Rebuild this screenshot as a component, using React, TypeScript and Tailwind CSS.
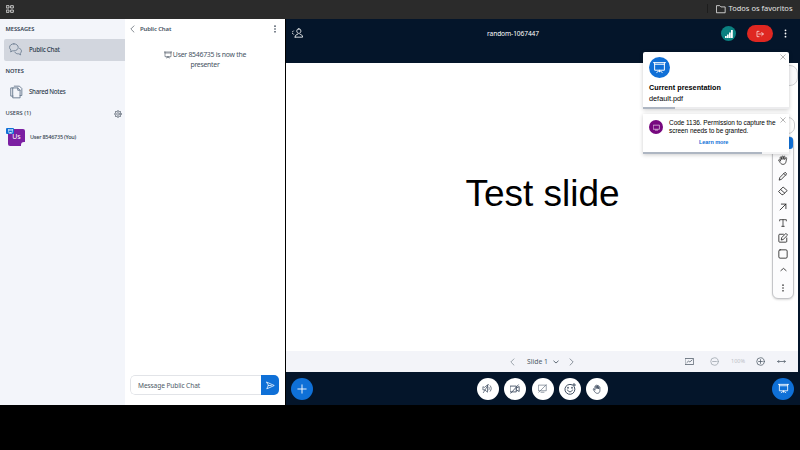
import type { ReactNode } from "react";

type IconProps = { className?: string; children: ReactNode; sw?: number };

function Icon({ className = "", children, sw = 1.5 }: IconProps) {
  return (
    <svg viewBox="0 0 24 24" className={"block shrink-0 " + className} fill="none" stroke="currentColor" strokeWidth={sw} strokeLinecap="round" strokeLinejoin="round">
      {children}
    </svg>
  );
}

const Kebab = ({ className }: { className: string }) => (
  <svg viewBox="0 0 24 24" className={"block shrink-0 " + className} fill="currentColor">
    <circle cx="12" cy="3.5" r="2.4" />
    <circle cx="12" cy="12" r="2.4" />
    <circle cx="12" cy="20.5" r="2.4" />
  </svg>
);

const Presentation = ({ className, sw = 1.8 }: { className: string; sw?: number }) => (
  <Icon className={className} sw={sw}>
    <path d="M1 3h22M3 3v14h18V3M3 6h18M12 17v3M7 21l3-2h4l3 2" />
  </Icon>
);

function Sidebar() {
  return (
    <nav className="flex w-[125px] shrink-0 flex-col bg-[#f3f5fa] text-[#2f3c4d]">
      <h2 className="mt-[5px] h-[10px] pl-[5.5px] text-[5.7px] font-semibold leading-[10px]">MESSAGES</h2>
      <div className="ml-1 mt-[5px] flex h-[22px] items-center rounded-l-[2px] bg-[#d2d6de] pb-[1px] pl-[5px]">
        <Icon className="size-[13px] text-[#6b7c90]" sw={1.6}>
          <path d="M9 1.5c-4.500 0-8 2.800-8 6.500 0 2 1 3.800 2.700 5L3 16.500l4-2.200c.7.100 1.300.2 2 .2 4.500 0 8-2.900 8-6.500s-3.500-6.500-8-6.500zM19.500 10c2.200 1 3.500 2.700 3.500 4.700 0 1.700-.9 3.200-2.200 4.100l.7 3.200-3.500-2c-3.500.3-6.200-1-7.200-3" />
        </Icon>
        <span className="ml-[7px] text-[6.2px] font-medium tracking-[-0.23px]">Public Chat</span>
      </div>
      <h2 className="mt-[5px] h-[11px] pl-[5.5px] text-[5.7px] font-semibold leading-[11px]">NOTES</h2>
      <div className="mt-[4px] flex h-[21px] items-center pl-[9px]">
        <Icon className="size-[14px] text-[#6b7c90]" sw={1.6}>
          <path d="M7 5h8l4 4v13H7zM15 5v4h4M7 19H3V5h4M9 2h9l4 4v12h-3" />
        </Icon>
        <span className="ml-[6px] text-[6.2px] font-medium tracking-[-0.28px]">Shared Notes</span>
      </div>
      <div className="mt-[6px] flex h-[11px] items-center justify-between pl-[5.500px] pr-[3px]">
        <h2 className="text-[5.700px] font-medium">USERS (1)</h2>
        <Icon className="size-[8px] text-[#56616e]" sw={2}>
          <circle cx="12" cy="12" r="9" />
          <circle cx="12" cy="12" r="4" />
          <path d="M12 1v2M12 21V23M1 12h2M21 12H23M4.200 4.200l1.400 1.400M18.400 18.400l1.400 1.400M4.200 19.800l1.400-1.400M18.400 5.600l1.400-1.400" />
        </Icon>
      </div>
      <div className="mt-[8px] flex h-[21px] items-center pl-[8px]">
        <div className="relative flex h-[17px] w-[17px] items-center justify-center rounded-[2px] bg-[#7b1fa2] text-[7px] text-white">
          Us
          <span className="absolute -left-[2px] -top-[1px] flex h-[6px] w-[8px] items-center justify-center rounded-[1px] bg-[#1070d7]">
            <Presentation className="size-[5px]" sw={2.5} />
          </span>
          <span className="absolute -bottom-[1px] -right-[1px] size-[5px] rounded-tl-[3px] bg-[#f3f5fa]" />
        </div>
        <span className="ml-[5px] text-[5.500px] font-medium tracking-[-0.24px]">User 8546735 (You)</span>
      </div>
    </nav>
  );
}

function Chat() {
  return (
    <section className="flex w-[160px] shrink-0 flex-col bg-white text-[#46535f]">
      <header className="flex h-[20px] items-center pl-[5px] pr-[6px]">
        <Icon className="h-[8px] w-[5px] text-[#3d4854]" sw={3}>
          <path d="M19-3L4 12l15 15" />
        </Icon>
        <span className="ml-[5px] flex-1 text-[6px] font-semibold tracking-[-0.15px]">Public Chat</span>
        <Kebab className="size-[8px] text-[#2f3c4d]" />
      </header>
      <div className="mt-[11px] flex flex-1 flex-col items-center text-[6.900px] leading-[10.400px] tracking-[-0.26px]">
        <p className="flex items-center gap-[1px] whitespace-nowrap">
          <Presentation className="size-[8px]" />
          User 8546735 is now the
        </p>
        <p>presenter</p>
      </div>
      <div className="ml-[5px] mr-[6px] mb-[10px] flex h-[20px] overflow-hidden rounded-[5px]">
        <div className="flex flex-1 items-center rounded-l-[5px] border border-r-0 border-[#e2e4e8] pl-[7px] pt-[1px] text-[6.600px] tracking-[-0.1px] text-[#4e5a66]">Message Public Chat</div>
        <button className="flex w-[18px] items-center justify-center bg-[#0f70d7] text-white">
          <Icon className="size-[9px]" sw={2}>
            <path d="M2 3l20 9-20 9 4-9zM6 12h8" />
          </Icon>
        </button>
      </div>
    </section>
  );
}

function Toolbox() {
  return (
    <div className="absolute right-[4px] top-[73px] flex h-[163px] w-[22px] flex-col items-center rounded-[6px] border border-[#c4c5c8] bg-[#fcfcfd] text-[#222] shadow-[0_1px_2px_rgba(0,0,0,0.15)]">
      <div className="h-[12px] w-full rounded-[3px] bg-[#1070d7]" />
      <div className="mt-[6px] flex flex-col items-center gap-[5.700px]">
        <Icon className="size-[10px]" sw={1.8}>
          <path d="M6 14L5 6.500C4.700 4.500 7.300 4 7.800 6L9 11 9 4c0-2 3-2 3 0l.3 6.500L13.500 4c.4-2 3.200-1.500 3 .5L16 11l2-4c1-1.800 3.500-.7 2.800 1.200L19 17c-1 4-3.500 5.500-7 5.500-4 0-6-2.500-8-6L1.500 13C1 11 3.500 10.500 4.500 12z" />
        </Icon>
        <Icon className="size-[10px]" sw={2}>
          <path d="M3 21l1.500-5.500L17 3l4 4L8.500 19.500zM14 6l4 4" />
        </Icon>
        <Icon className="size-[10px]" sw={2}>
          <path d="M13 3l9 8-10 10-3-.5L2 14zM7 9l9 8" />
        </Icon>
        <Icon className="size-[10px]" sw={2}>
          <path d="M5 19L19 5M8 5h11v11" />
        </Icon>
        <Icon className="size-[10px]" sw={1.8}>
          <path d="M4 7V4h16v3M12 4v16M9 20h6" />
        </Icon>
        <Icon className="size-[10px]" sw={2}>
          <path d="M13 3H4a2 2 0 00-2 2v15a2 2 0 002 2h15a2 2 0 002-2V12M8 16l1-5L19 1l4 4-10 10z" />
        </Icon>
        <Icon className="size-[10px]" sw={2}>
          <rect x="2" y="2" width="20" height="20" rx="3" />
        </Icon>
        <Icon className="size-[9px]" sw={2.200}>
          <path d="M5 15l7-6 7 6" />
        </Icon>
      </div>
      <Kebab className="mt-[10px] size-[8px] text-[#333]" />
    </div>
  );
}

const Close = ({ className }: { className: string }) => (
  <Icon className={"absolute size-[6px] text-[#8a8a8a] " + className} sw={2.500}>
    <path d="M3 3l18 18M21 3L3 21" />
  </Icon>
);

function Toasts() {
  return (
    <div className="absolute left-[357px] top-[33px] flex w-[146px] flex-col font-['Liberation_Sans',sans-serif] text-black">
      <div className="relative flex h-[57px] flex-col rounded-t-[2px] bg-white pl-[6px] pt-[5px] shadow-[0_1px_4px_rgba(0,0,0,0.2)]">
        <div className="flex size-[21px] items-center justify-center rounded-full bg-[#1070d7] text-white">
          <Presentation className="size-[13px]" />
        </div>
        <b className="mt-[4px] text-[7.200px] leading-[11px] tracking-[0.040px]">Current presentation</b>
        <span className="text-[7.300px] leading-[11px]">default.pdf</span>
        <Close className="right-[3px] top-[2px]" />
        <div className="absolute bottom-0 left-0 h-[2px] w-full bg-[#ececee]">
          <div className="h-full w-[32px] bg-[#aeb6c2]" />
        </div>
      </div>
      <div className="relative mt-[5px] flex h-[40px] bg-white pl-[6px] shadow-[0_1px_4px_rgba(0,0,0,0.2)]">
        <div className="mt-[6px] flex size-[14px] items-center justify-center rounded-full bg-[#77087f] text-white">
          <Icon className="size-[7px]" sw={2}>
            <path d="M2 4h20v14H2zM8 21h8" />
          </Icon>
        </div>
        <div className="ml-[6px] mt-[5px] whitespace-nowrap text-[6.500px] leading-[7.500px] tracking-[-0.060px]">
          <p>Code 1136. Permission to capture the</p>
          <p>screen needs to be granted.</p>
          <p className="mt-[5px] pl-[30px] text-[5.500px] font-bold text-[#1070d7]">Learn more</p>
        </div>
        <Close className="right-[3px] top-[3px]" />
        <div className="absolute bottom-0 left-0 h-[2px] w-full bg-[#f4f4f5]">
          <div className="h-full w-[119px] bg-[#aeb6c2]" />
        </div>
      </div>
    </div>
  );
}

function Round({ children }: { children: ReactNode }) {
  return <button className="flex size-[22px] items-center justify-center rounded-full bg-white text-[#37465a]">{children}</button>;
}

function Stage() {
  return (
    <main className="relative flex min-w-0 flex-1 flex-col bg-[#04152a]">
      <header className="flex h-[44px] justify-between px-[6px] text-white">
        <div className="w-[140px] pt-[9px]">
          <Icon className="h-[10px] w-[12px]" sw={2}>
            <path d="M1 7l-4 4 4 4M14 2a5 5 0 00-5 5c0 3 2 6 5 6s5-3 5-6a5 5 0 00-5-5zM5 22h18c0-5-3-6-6-7M5 22c0-5 3-6 6-7" />
          </Icon>
        </div>
        <h1 className="flex-1 pl-[55px] pt-[9px] text-[6.600px] leading-[11px] tracking-[-0.080px]">random-1067447</h1>
        <div className="flex items-start justify-end pt-[6px]">
          <div className="mt-[1px] flex size-[15px] items-center justify-center rounded-full bg-[#0b8080]">
            <svg viewBox="0 0 8 8" className="size-[8px]" fill="white">
              <path d="M0 6h1.700v2H0zM2 4.500h1.700V8H2zM4 2.500h1.700V8H4zM6 0h1.800v8H6z" />
            </svg>
          </div>
          <div className="ml-[11px] flex h-[17px] w-[26px] items-center justify-center rounded-full bg-[#df2721]">
            <Icon className="size-[8px]" sw={2}>
              <path d="M9 4H3v16h6M8 12h14M17 7l5 5-5 5" />
            </Icon>
          </div>
          <Kebab className="ml-[8px] mr-[4px] mt-[4px] size-[9px]" />
        </div>
      </header>
      <div className="relative mr-[2px] flex h-[288px] items-center justify-center bg-white pr-0">
        <p className="-mt-[27px] ml-[1px] whitespace-nowrap font-['Liberation_Sans',sans-serif] text-[37px] leading-none text-black">Test slide</p>
        <div className="absolute right-0 top-[2px] h-[21px] w-[20px] rounded-[8px] border border-[#d0d1d4] bg-[#f8f8fa]" />
        <div className="absolute right-[3px] top-[54px] h-[17px] w-[22px] rounded-[7px] border border-[#c8c9cc] bg-white" />
        <Toolbox />
      </div>
      <div className="mr-[2px] flex h-[21px] items-center bg-[#f3f4f9] text-[#4e5a66]">
        <div className="ml-[224px] flex items-center">
          <Icon className="h-[8px] w-[5px]" sw={2.500}>
            <path d="M19-3L4 12l15 15" />
          </Icon>
          <span className="ml-[12px] pt-[1px] text-[6.800px]">Slide 1</span>
          <Icon className="ml-[5px] size-[6px]" sw={3.500}>
            <path d="M3 8l9 8 9-8" />
          </Icon>
          <Icon className="ml-[10px] h-[8px] w-[5px]" sw={3}>
            <path d="M5-3L20 12 5 27" />
          </Icon>
        </div>
        <div className="ml-auto mr-[12px] flex items-center">
          <Icon className="size-[9px]" sw={2}>
            <path d="M1 4h22v16H1zM5 15l4-4 4 2 6-5" />
          </Icon>
          <Icon className="ml-[16px] size-[9px] text-[#9aa1aa]" sw={2}>
            <circle cx="12" cy="12" r="10" />
            <path d="M7 12h10" />
          </Icon>
          <span className="ml-[12px] text-[5.500px] text-[#bcc0c7]">100%</span>
          <Icon className="ml-[11px] size-[9px]" sw={2}>
            <circle cx="12" cy="12" r="10" />
            <path d="M7 12h10M12 7v10" />
          </Icon>
          <Icon className="ml-[12px] size-[9px]" sw={2}>
            <path d="M2 12h20M5 9l-3 3 3 3M19 9l3 3-3 3" />
          </Icon>
        </div>
      </div>
      <footer className="flex h-[33px] items-center justify-between pl-[5px] pr-[6px]">
        <button className="flex size-[22px] items-center justify-center rounded-full bg-[#0f70d7] text-white">
          <Icon className="size-[10px]" sw={2.200}>
            <path d="M12 2v20M2 12h20" />
          </Icon>
        </button>
        <div className="flex gap-[5.400px]">
          <Round>
            <Icon className="size-[11px]" sw={1.500}>
              <path d="M2 9v6h4l6 5V4L6 9zM15 9c1 2 1 4 0 6M18 6c3 4 3 8 0 12M3 21L14 3" />
            </Icon>
          </Round>
          <Round>
            <Icon className="size-[10px]" sw={2}>
              <path d="M1 5h14v14H1zM15 10l7-4v12l-7-4M2 22L20 2" />
            </Icon>
          </Round>
          <Round>
            <Icon className="size-[9px] text-[#647080]" sw={1.800}>
              <path d="M2 3h20v15H2zM2 22L22 2M8 22h8" />
            </Icon>
          </Round>
          <Round>
            <Icon className="size-[12px]" sw={1.900}>
              <path d="M16 3.500a10 10 0 105 5M20 1v6M17 4h6M7 14c2 5 8 5 10 0" />
              <path d="M8 9v1M16 9v1" strokeWidth="3" />
            </Icon>
          </Round>
          <Round>
            <Icon className="size-[10px]" sw={1.800}>
              <path d="M7 14V6a1.500 1.500 0 013 0v5V4a1.500 1.500 0 013 0v7V5a1.500 1.500 0 013 0v7V8a1.500 1.500 0 013 0v8c0 4-3 6.500-6 6.500-4 0-6-3-8-6l-2-4c0-2 2-2 4 1.500" />
            </Icon>
          </Round>
        </div>
        <button className="flex size-[22px] items-center justify-center rounded-full bg-[#0f70d7] text-white">
          <Presentation className="size-[11px]" />
        </button>
      </footer>
      <Toasts />
    </main>
  );
}

export default function App() {
  return (
    <div className="flex h-[450px] w-[800px] flex-col overflow-hidden bg-black font-['Noto_Sans',sans-serif]">
      <div className="flex h-[19px] shrink-0 items-center justify-between bg-[#2b2b2b] pb-[2px] pl-[6px] pr-[7.500px] text-[#e4e4e4]">
        <Icon className="size-[8px]" sw={2.500}>
          <path d="M2 2h7v7H2zM15 2h7v7h-7zM2 15h7v7H2zM15 15h7v7h-7z" />
        </Icon>
        <div className="flex items-center">
          <div className="mr-[8px] h-[9px] w-px bg-[#1d1d1d]" />
          <Icon className="size-[10px]" sw={2}>
            <path d="M2 4h7l3 3h10v14H2z" />
          </Icon>
          <span className="ml-[3px] text-[7.500px]">Todos os favoritos</span>
        </div>
      </div>
      <div className="flex h-[386px] shrink-0">
        <Sidebar />
        <Chat />
        <div className="w-px bg-black" />
        <Stage />
      </div>
    </div>
  );
}
